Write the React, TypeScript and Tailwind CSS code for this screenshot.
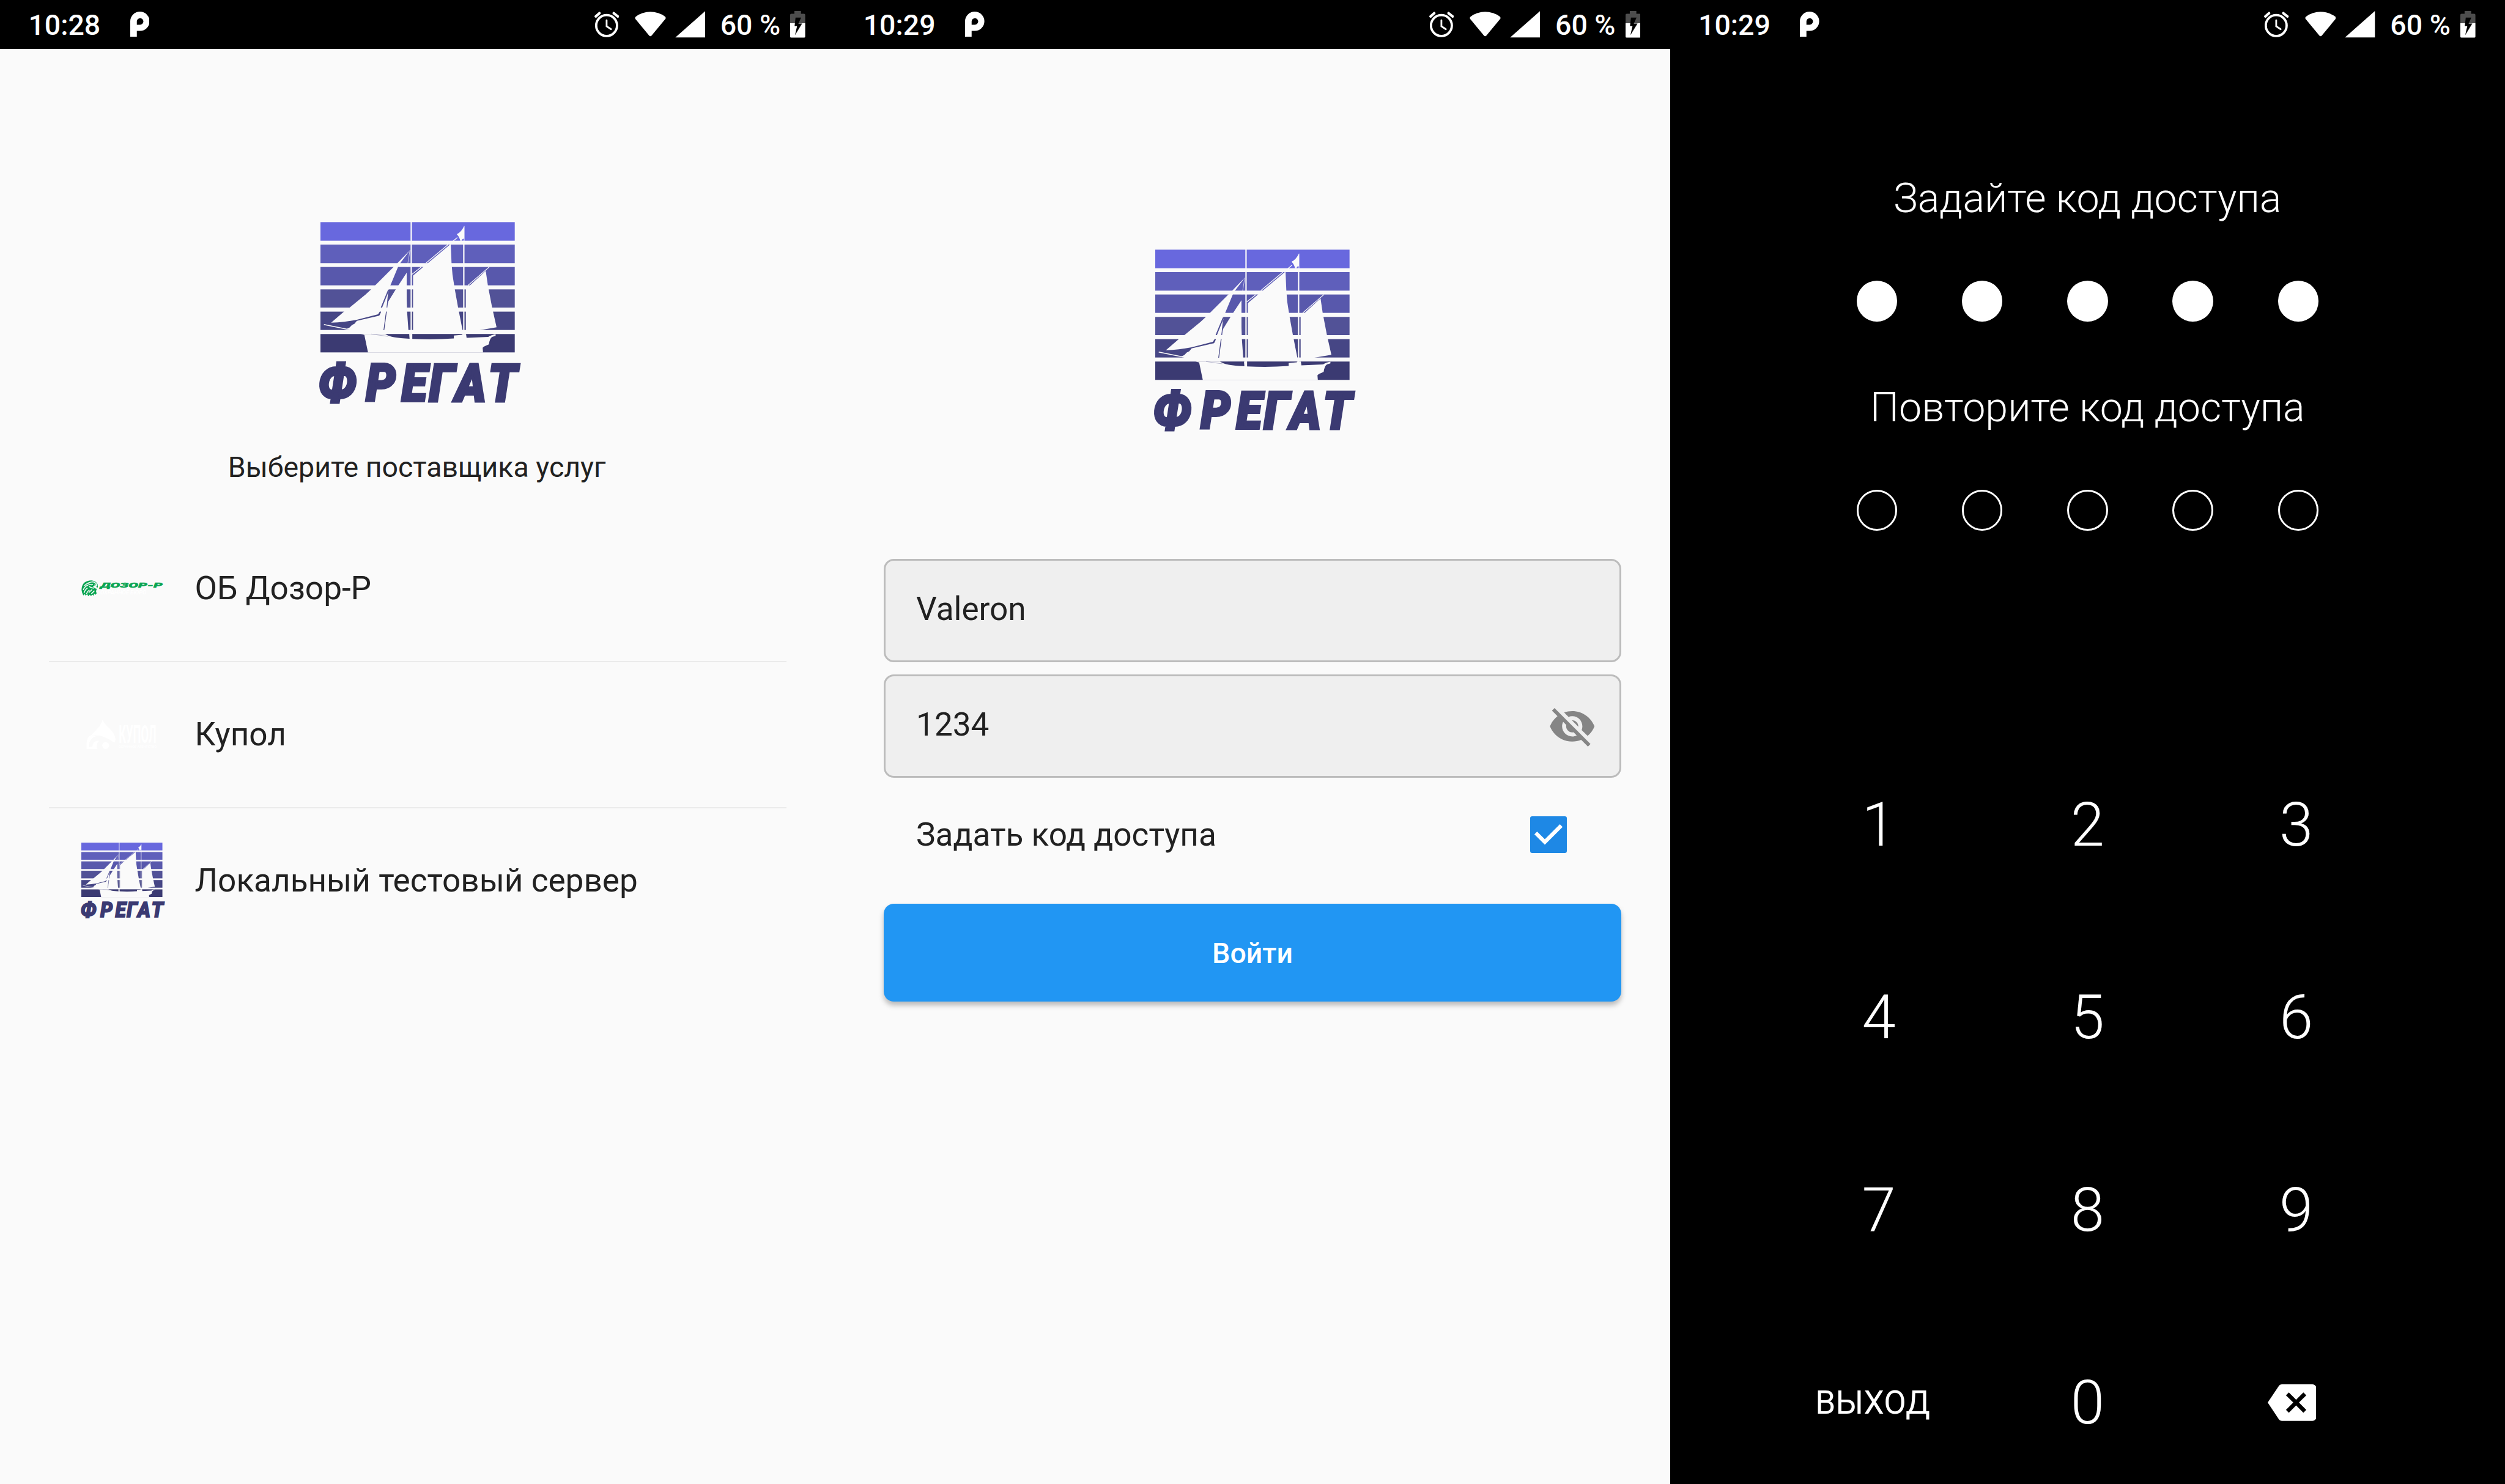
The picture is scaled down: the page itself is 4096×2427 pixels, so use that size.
import type { ReactNode } from "react";
import { MdBackspace, MdVisibilityOff } from "react-icons/md";

function FregatLogo({ className }: { className: string }) {
  return (
    <svg viewBox="37 37 1006 936" preserveAspectRatio="none" overflow="visible" className={className}>
      <rect x="37" y="38" width="1005" height="96" fill="#6868de" />
      <rect x="37" y="154" width="1005" height="96" fill="#5f5fbb" />
      <rect x="37" y="270" width="1005" height="95" fill="#5858ac" />
      <rect x="37" y="386" width="1005" height="94" fill="#525297" />
      <rect x="37" y="501" width="1005" height="95" fill="#464685" />
      <rect x="37" y="617" width="1005" height="95" fill="#3b3a72" />
      <g fill="#fafafa">
        <rect x="503" y="37" width="7" height="604" />
        <rect x="775" y="134" width="7" height="485" />
        <path d="M782 58V134H779V124Q770 122 768 134H760Q757 116 742 100Q765 90 780 58Z" />
        <path d="M711 154L715 250L720 310L732 386L749 480L772 597H516V315L568 270L595 248L707 154Z" />
        <path d="M892 290L903 365L925 480L948 582L860 597H789V383L810 365Z" />
        <path d="M500 183L452 247L438 270L400 362L350 480L343 502L335 515L225 543Q160 556 92 558L160 500L188 480L270 413L300 385L320 365L437 248Z" />
        <path d="M483 300V440L485 500L492 597H365L378 500L382 470L388 448L427 385L440 365Z" />
        <path d="M390 395L380 480L365 597H200L173 590L187 584L200 570L213 564L225 549L341 522L353 488Z" />
        <path d="M245 617L264 622L283 712.5H878L876 688Q884 680 908 671Q912 640 925 632L943 626V617Z" />
      </g>
      <g fill="#3b3a72">
        <path d="M372 617Q400 638 498 641L496 617Z" />
        <path d="M512 617V642Q620 648 727 640V625L770 621V617Z" />
        <path d="M790 617L793 637L905 632Q920 622 945 617Z" />
      </g>
      <g fill="none" stroke="#fafafa" strokeWidth="4">
        <path d="M745 118L722 137M697 154L583 250M558 270L510 308M910 270L800 365" />
        <path d="M55 568L200 597" strokeWidth="5" />
        <path d="M500 183L486 270" strokeWidth="2" />
      </g>
      <g fill="none" stroke="#464685" strokeWidth="4">
        <path d="M341 519L349 501M378 501L365 597" />
        <path d="M388 390L351 480M389 400L381 480" stroke="#525297" />
        <path d="M300 617L385 629" stroke="#8a8ab0" strokeWidth="2" />
      </g>
      <g transform="scale(0.9 1)">
        <text
          x="30 303 508 666 816 1006"
          y="965"
          fill="#3b3a72"
          stroke="#3b3a72"
          strokeWidth="13"
          className="font-[Roboto] text-[268px] leading-none font-black italic"
        >
          ФРЕГАТ
        </text>
      </g>
    </svg>
  );
}

function DozorLogo() {
  return (
    <svg viewBox="24 34 420 84" overflow="visible" className="h-[26.6px] w-[132.7px]">
      <path
        d="M33 110L28 98L25 84Q26 58 40 46Q56 34 78 35Q100 38 108 54L110 70L104 73L102 64L92 62L84 68L96 76L104 78L100 90L103 102L96 110L90 102L88 114L80 108L74 116L68 108L60 116L54 106L46 114L42 104L36 112Z"
        fill="#0aa552"
      />
      <path
        d="M40 62Q58 44 84 42M34 84Q40 66 60 58M38 100Q42 84 56 74M50 104Q54 92 66 84M64 66Q78 76 90 74M62 98L80 82M76 104L92 88M60 52Q72 60 84 56M84 42Q102 46 103 60L92 58"
        fill="none"
        stroke="#fafafa"
        strokeWidth="5"
      />
      <text
        x="122"
        y="72"
        textLength="322"
        lengthAdjust="spacingAndGlyphs"
        fill="#0aa552"
        stroke="#0aa552"
        strokeWidth="1.5"
        className="font-[Roboto] text-[34px] font-black italic"
      >
        ДОЗОР-Р
      </text>
      <text
        x="122"
        y="108"
        textLength="238"
        lengthAdjust="spacingAndGlyphs"
        fill="#ffffff"
        className="font-[Roboto] text-[27px] font-medium italic"
      >
        ОХРАННОЕ БЮРО
      </text>
    </svg>
  );
}

function KupolLogo() {
  return (
    <svg viewBox="140 1241.5 140 51" overflow="visible" className="h-[48.4px] w-[132.7px]" fill="#ffffff">
      <path d="M176.6 1241.5C180 1252 198 1260 199 1276L197 1281Q178 1268 165 1268Q157 1268 155 1270C165 1260 174 1252 176.6 1241.5Z" />
      <path d="M155 1269Q149 1274 149 1284V1292H168Q165 1288 167 1284Q169 1279 171 1278Q160 1277 159 1288L153 1289Q153 1270 172 1269Z" />
      <circle cx="182" cy="1286" r="6" />
      <text
        x="204.5"
        y="1282"
        textLength="65"
        lengthAdjust="spacingAndGlyphs"
        className="font-[Roboto] text-[42px] font-bold"
      >
        КУПОЛ
      </text>
      <text
        x="204"
        y="1290.3"
        textLength="66"
        lengthAdjust="spacingAndGlyphs"
        className="font-[Roboto] text-[6.5px] font-medium"
      >
        ОХРАННОЕ АГЕНТСТВО
      </text>
    </svg>
  );
}

function StatusBar({ time }: { time: string }) {
  return (
    <header className="flex h-[79.65px] shrink-0 items-center bg-black pr-[48.4px] pl-[46.4px] text-[46.46px] leading-[56px] font-medium text-white">
      <span className="w-[166.3px] pt-[3px]">{time}</span>
      <svg viewBox="673 62 100 130" className="h-[41.1px] w-[31.6px]" fill="#ffffff">
        <path
          fillRule="evenodd"
          d="M673 192V112A50 50 0 1 1 723 162H707V192ZM707 130H723A17 17 0 1 0 707 113Z"
        />
      </svg>
      <div className="ml-auto flex items-center">
        <svg viewBox="75 58 127 133" className="mr-[26px] h-[42px] w-[40.1px]" fill="none" stroke="#ffffff">
          <circle cx="138" cy="130" r="54" strokeWidth="12" />
          <path d="M138 103V134L161 149" strokeWidth="9" strokeLinecap="round" />
          <path d="M82 83L101 66M175 66L196 83" strokeWidth="13" strokeLinecap="round" />
        </svg>
        <svg viewBox="284 58 161 129" className="mr-[14.9px] h-[40.8px] w-[50.9px]" fill="#ffffff">
          <path d="M290 83Q325 59 364 59Q405 59 440 83Q447 89 442 96L370 183Q364 188 359 183L287 96Q282 89 290 83Z" />
        </svg>
        <svg viewBox="492 54 156 138" className="mr-[24.7px] h-[43.6px] w-[49.3px]" fill="#ffffff">
          <path d="M648 54V191H493Z" />
        </svg>
        <span className="w-[114.7px] pt-[3px] whitespace-nowrap">60 %</span>
        <svg viewBox="1089 57 78 138" className="h-[43.6px] w-[24.6px]">
          <path d="M1111 57H1145V71H1161Q1167 71 1167 77V120H1089V77Q1089 71 1095 71H1111Z" fill="#4d4d4d" />
          <path d="M1089 120H1167V189Q1167 195 1161 195H1095Q1089 195 1089 189Z" fill="#ffffff" />
          <path d="M1117 91H1146L1132 122H1151L1114 182L1125 135H1112Z" fill="#000000" />
        </svg>
      </div>
    </header>
  );
}

function ProviderRow({ logo, name, divided }: { logo: ReactNode; name: string; divided?: boolean }) {
  return (
    <li
      className={
        divided
          ? "flex h-[238.93px] items-center gap-[53.1px] border-t-2 border-[#ebebeb] pl-[53.1px]"
          : "flex h-[238.93px] items-center gap-[53.1px] pt-[2px] pl-[53.1px]"
      }
    >
      {logo}
      <span className="text-[53.1px] leading-[64px]">{name}</span>
    </li>
  );
}

function ProviderScreen() {
  return (
    <section className="flex flex-col bg-[#fafafa] text-[#212121]">
      <StatusBar time="10:28" />
      <FregatLogo className="mt-[283.3px] h-[295.8px] w-[318px] self-center" />
      <h1 className="mt-[75.2px] pr-[2px] text-center text-[46.46px] leading-[60px]">Выберите поставщика услуг</h1>
      <ul className="mx-[79.65px] mt-[48px]">
        <ProviderRow logo={<DozorLogo />} name="ОБ Дозор-Р" />
        <ProviderRow logo={<KupolLogo />} name="Купол" divided />
        <ProviderRow
          logo={<FregatLogo className="h-[123.5px] w-[132.7px]" />}
          name="Локальный тестовый сервер"
          divided
        />
      </ul>
    </section>
  );
}

function Field({ value, children }: { value: string; children?: ReactNode }) {
  return (
    <div className="flex h-[169.2px] items-center justify-between rounded-[16.6px] border-[3px] border-[#bcbcbc] bg-[#efefef] pr-[37px] pl-[50.1px]">
      <span className="pb-[6px] text-[53.1px] leading-[64px]">{value}</span>
      {children}
    </div>
  );
}

function LoginScreen() {
  return (
    <section className="flex flex-col bg-[#fafafa] text-[#212121]">
      <StatusBar time="10:29" />
      <FregatLogo className="mt-[328.3px] h-[295.8px] w-[318px] self-center" />
      <form className="mx-[79.65px] mt-[210.3px] flex flex-col">
        <div className="flex flex-col gap-[19.8px]">
          <Field value="Valeron" />
          <Field value="1234">
            <MdVisibilityOff className="size-[79.65px] text-[#858585]" />
          </Field>
        </div>
        <label className="mt-[53.1px] flex h-[80px] items-center justify-between pr-[89.2px] pl-[53.1px] text-[53.1px] leading-[64px]">
          Задать код доступа
          <svg viewBox="0 0 190 190" className="size-[60px] rounded-[3.3px] bg-[#1e88e5]">
            <path d="M29 86L76 133L161 48" fill="none" stroke="#ffffff" strokeWidth="20" />
          </svg>
        </label>
        <button
          type="button"
          className="mt-[73px] h-[159.3px] rounded-[16.6px] bg-[#2196f3] pt-[2px] text-[46.46px] leading-[56px] font-medium text-white shadow-[0_6px_8px_rgba(0,0,0,0.26)]"
        >
          Войти
        </button>
      </form>
    </section>
  );
}

const DOTS = [0, 1, 2, 3, 4];
const DIGITS = ["1", "2", "3", "4", "5", "6", "7", "8", "9"];

function CodeDots({ filled }: { filled?: boolean }) {
  return (
    <div className="mt-[95px] flex justify-center gap-[105.8px]">
      {DOTS.map((dot) => (
        <span
          key={dot}
          className={
            filled
              ? "size-[66.4px] rounded-full bg-white"
              : "size-[66.4px] rounded-full border-[3px] border-white"
          }
        />
      ))}
    </div>
  );
}

function PinScreen() {
  return (
    <section className="flex flex-col bg-black text-white">
      <StatusBar time="10:29" />
      <h2 className="mt-[204.6px] text-center text-[66.37px] leading-[80px] font-light">Задайте код доступа</h2>
      <CodeDots filled />
      <h2 className="mt-[100.7px] text-center text-[66.37px] leading-[80px] font-light">Повторите код доступа</h2>
      <CodeDots />
      <div className="mx-[170.67px] mt-[421.2px] grid grid-cols-3 gap-y-[195.2px] text-center text-[99.56px] leading-[120px] font-light">
        {DIGITS.map((digit) => (
          <span key={digit}>{digit}</span>
        ))}
        <span className="pr-[20px] text-[53.1px] font-normal">ВЫХОД</span>
        <span>0</span>
        <span className="flex items-center justify-center pr-[14px] pb-[2px]">
          <MdBackspace className="size-[79.65px]" />
        </span>
      </div>
    </section>
  );
}

export default function App() {
  return (
    <main className="grid h-[2427px] w-[4096px] grid-cols-3 overflow-hidden font-[Roboto,sans-serif]">
      <ProviderScreen />
      <LoginScreen />
      <PinScreen />
    </main>
  );
}
